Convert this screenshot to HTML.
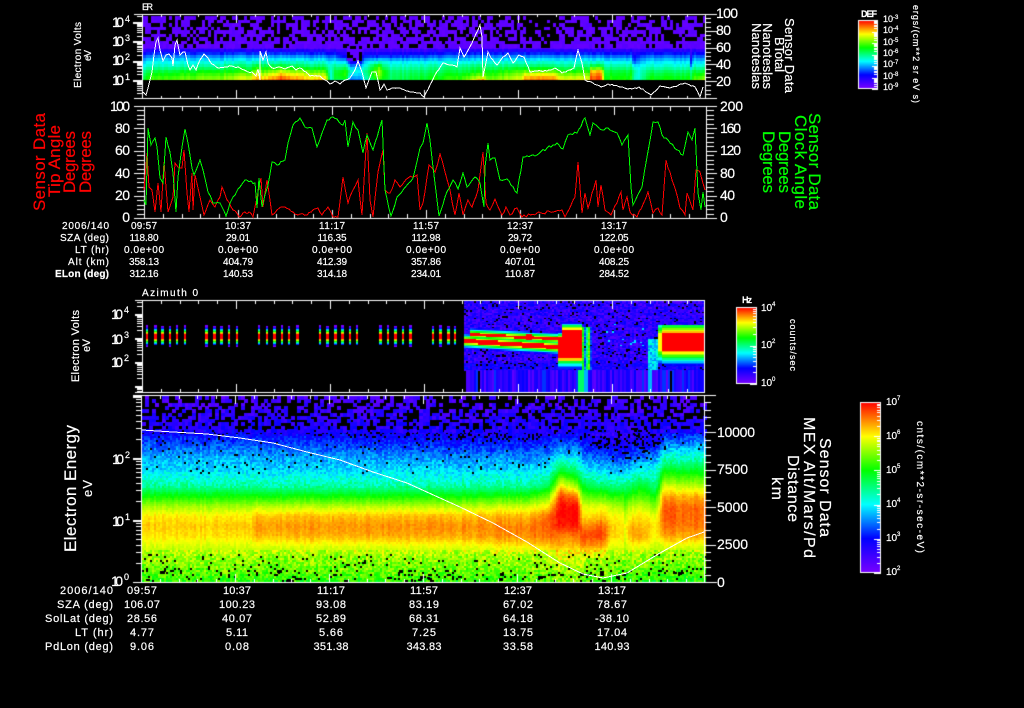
<!DOCTYPE html>
<html lang="en">
<head>
<meta charset="utf-8">
<title>Sensor Data</title>
<style>
html,body{margin:0;padding:0;background:#000;width:1024px;height:708px;overflow:hidden}
canvas,svg{position:absolute;left:0;top:0;display:block}
text{font-family:"Liberation Sans",sans-serif;stroke-width:.2}
.w text,.w{fill:#fff;stroke:#fff}
.r text{fill:#f00;stroke:#f00}
.g text{fill:#0f0;stroke:#0f0}
.t1 text{font-size:10px}
.t2 text{font-size:11px}
.n{font-size:14px}
.s{font-size:9px}
.m{text-anchor:middle}
.e{text-anchor:end}
</style>
</head>
<body>
<canvas id="c" width="1024" height="708"></canvas>
<svg width="1024" height="708" viewBox="0 0 1024 708">
<g fill="none" shape-rendering="crispEdges" stroke-width="1">
<polyline class="j" data-a=".7" stroke="#fff" points="142,92 146,95 148,88 150,80 152,72 154,55 156,42 158,38 160,50 163,61 166,55 169,54 172,58 173,66 175,45 177,40 180,55 183,52 185,52 188,65 190,70 193,65 196,70 200,60 204,54 208,58 212,64 218,68 225,67 232,66 240,68 248,72 252,72 256,76 258,69 260,80 260,51 263,60 266,52 268,63 272,68 280,67 285,69 292,66 296,70 300,68 306,72 310,76 320,76 325,80 330,84 335,81 340,84 345,80 350,78 355,70 358,61 362,72 366,88 369,80 372,72 376,72 380,90 384,84 387,90 392,88 400,88 410,92 420,93 424,97 430,85 435,75 443,63 451,65 457,67 460,48 464,57 472,43 480,25 482,37 483,77 488,52 491,58 497,65 503,57 508,53 513,63 519,55 524,57 530,72 535,71 547,71 555,68 562,73 574,68 578,50 582,63 585,80 593,83 601,87 608,84 620,87 632,89 639,87 651,95 660,86 670,88 685,83 695,87 700,97 703,87"/>
<polyline class="j" data-a="1.6" stroke="#f00" points="144,190 147,153 149,187 152,190 155,212 158,183 161,212 164,162 168,212 173,197 175,163 178,167 182,168 184,150 187,193 189,212 192,173 193,210 195,175 200,197 204,215 210,200 215,207 220,197 222,187 227,200 233,210 239,217 243,213 249,212 253,217 261,178 263,207 267,180 272,215 277,210 285,207 293,212 298,215 307,215 318,208 322,215 328,207 333,217 338,217 343,177 348,203 353,190 358,180 362,215 367,133 370,200 373,217 378,172 383,150 385,190 390,193 395,180 400,187 408,178 417,175 420,210 423,203 429,165 435,172 440,154 445,172 450,190 455,215 459,193 463,215 468,200 472,207 478,190 483,152 486,203 490,210 495,199 502,215 506,207 510,215 517,208 522,217 537,213 553,212 562,210 565,217 575,197 578,162 582,213 585,193 588,208 596,180 598,207 601,185 605,210 611,215 617,203 621,192 623,210 627,197 630,212 637,217 648,192 653,213 658,208 662,215 666,160 672,180 675,188 680,208 685,215 687,193 693,210 696,170 700,172 705,190"/>
<polyline class="j" data-a="1.3" stroke="#0f0" points="144,200 146,205 148,128 151,145 155,138 157,147 160,178 163,183 166,137 170,152 173,173 176,212 178,177 182,147 185,129 188,143 192,168 194,175 197,168 200,160 203,170 208,192 213,203 220,203 226,216 230,203 233,197 240,187 245,180 255,183 257,208 259,178 262,207 265,195 268,185 272,162 277,165 285,160 288,143 293,125 300,118 305,127 312,128 317,147 322,133 327,120 333,117 343,125 345,120 348,147 353,122 358,130 363,153 367,135 373,150 382,120 385,190 391,216 397,197 403,190 413,178 420,148 423,143 427,123 430,140 433,167 439,216 445,197 453,180 458,189 463,173 467,187 475,177 480,183 484,207 485,167 488,143 490,160 495,158 500,180 507,179 517,193 523,157 537,155 547,148 557,143 563,149 568,135 577,133 585,118 590,135 593,123 602,130 608,128 617,133 622,145 628,135 631,187 633,205 642,187 647,157 653,122 658,122 662,135 668,140 677,150 683,155 688,132 692,140 695,128 698,193 701,210 703,192 705,207"/>
<polyline stroke="#fff" points="142,430 173,432 207,434 240,438 273,443 307,452 340,460 373,472 407,483 440,498 460,507 493,523 527,542 560,563 583,574 603,578 627,573 660,553 687,538 704,532"/>
</g>

<g class="r" font-size="17">
<text transform="translate(45,211) rotate(-90)" textLength="98">Sensor Data</text>
<text transform="translate(60,197) rotate(-90)" textLength="72">Tip Angle</text>
<text transform="translate(75,193) rotate(-90)" textLength="62">Degrees</text>
<text transform="translate(91,193) rotate(-90)" textLength="62">Degrees</text>
</g>
<g class="g" font-size="17">
<text transform="translate(809,113) rotate(90)" textLength="97">Sensor Data</text>
<text transform="translate(795,115) rotate(90)" textLength="94">Clock Angle</text>
<text transform="translate(779,131) rotate(90)" textLength="62">Degrees</text>
<text transform="translate(763,131) rotate(90)" textLength="62">Degrees</text>
</g>

<g class="w">
<text x="142" y="10" font-size="9" textLength="11">ER</text>
<text x="142" y="296" font-size="10" textLength="56">Azimuth 0</text>

<!-- panel 1 -->
<g class="n">
<text class="e" x="124" y="27" textLength="12">10</text><text class="e" x="124" y="46" textLength="12">10</text><text class="e" x="124" y="65" textLength="12">10</text><text class="e" x="124" y="85" textLength="12">10</text>
</g>
<g class="s"><text x="125" y="22">4</text><text x="125" y="41">3</text><text x="125" y="60">2</text><text x="125" y="80">1</text></g>
<text transform="translate(81,88) rotate(-90)" font-size="10" textLength="66">Electron Volts</text>
<text transform="translate(91,61) rotate(-90)" font-size="10" textLength="11">eV</text>
<g class="n">
<text x="716" y="18" textLength="22">100</text><text x="716" y="35" textLength="15">80</text><text x="716" y="52" textLength="15">60</text><text x="716" y="69" textLength="15">40</text><text x="716" y="86" textLength="15">20</text>
</g>
<g font-size="13">
<text transform="translate(785,18) rotate(90)" textLength="75">Sensor Data</text>
<text transform="translate(775,37) rotate(90)" textLength="35">BTotal</text>
<text transform="translate(763,23) rotate(90)" textLength="66">Nanoteslas</text>
<text transform="translate(752,23) rotate(90)" textLength="66">Nanoteslas</text>
</g>

<!-- panel 2 -->
<g class="n">
<text class="e" x="130" y="111" textLength="20">100</text><text class="e" x="130" y="133" textLength="15">80</text><text class="e" x="130" y="155" textLength="15">60</text><text class="e" x="130" y="178" textLength="15">40</text><text class="e" x="130" y="200" textLength="15">20</text><text class="e" x="130" y="222" textLength="8">0</text>
<text x="720" y="111" textLength="23">200</text><text x="720" y="133" textLength="21">160</text><text x="720" y="155" textLength="21">120</text><text x="720" y="178" textLength="15">80</text><text x="720" y="200" textLength="15">40</text><text x="720" y="222" textLength="8">0</text>
</g>

<g class="t1">
<text class="e" x="109" y="229" textLength="47">2006/140</text>
<text class="e" x="109" y="241" textLength="49">SZA (deg)</text>
<text class="e" x="109" y="253" textLength="34">LT (hr)</text>
<text class="e" x="109" y="265" textLength="41">Alt (km)</text>
<text class="e" x="109" y="277" textLength="54" font-weight="bold">ELon (deg)</text>
<text class="m" x="144" y="229" textLength="26">09:57</text><text class="m" x="238" y="229" textLength="26">10:37</text><text class="m" x="332" y="229" textLength="26">11:17</text><text class="m" x="426" y="229" textLength="26">11:57</text><text class="m" x="520" y="229" textLength="26">12:37</text><text class="m" x="614" y="229" textLength="26">13:17</text>
<text class="m" x="144" y="241" textLength="29">118.80</text><text class="m" x="238" y="241" textLength="24">29.01</text><text class="m" x="332" y="241" textLength="29">116.35</text><text class="m" x="426" y="241" textLength="29">112.98</text><text class="m" x="520" y="241" textLength="24">29.72</text><text class="m" x="614" y="241" textLength="29">122.05</text>
<text class="m" x="144" y="253" textLength="40">0.0e+00</text><text class="m" x="238" y="253" textLength="40">0.0e+00</text><text class="m" x="332" y="253" textLength="40">0.0e+00</text><text class="m" x="426" y="253" textLength="40">0.0e+00</text><text class="m" x="520" y="253" textLength="40">0.0e+00</text><text class="m" x="614" y="253" textLength="40">0.0e+00</text>
<text class="m" x="144" y="265" textLength="30">358.13</text><text class="m" x="238" y="265" textLength="30">404.79</text><text class="m" x="332" y="265" textLength="30">412.39</text><text class="m" x="426" y="265" textLength="30">357.86</text><text class="m" x="520" y="265" textLength="30">407.01</text><text class="m" x="614" y="265" textLength="30">408.25</text>
<text class="m" x="144" y="277" textLength="29">312.16</text><text class="m" x="238" y="277" textLength="30">140.53</text><text class="m" x="332" y="277" textLength="30">314.18</text><text class="m" x="426" y="277" textLength="30">234.01</text><text class="m" x="520" y="277" textLength="30">110.87</text><text class="m" x="614" y="277" textLength="30">284.52</text>
</g>

<!-- panel 3 -->
<g class="n">
<text class="e" x="123" y="319" textLength="12">10</text><text class="e" x="123" y="344" textLength="12">10</text><text class="e" x="123" y="367" textLength="12">10</text>
</g>
<g class="s"><text x="124" y="313">4</text><text x="124" y="338">3</text><text x="124" y="361">2</text></g>
<text transform="translate(79,382) rotate(-90)" font-size="11" textLength="72">Electron Volts</text>
<text transform="translate(90,352) rotate(-90)" font-size="11" textLength="13">eV</text>

<!-- panel 4 -->
<g class="n">
<text class="e" x="124" y="464" textLength="12">10</text><text class="e" x="124" y="526" textLength="12">10</text><text class="e" x="123" y="586" textLength="12">10</text>
</g>
<g class="s"><text x="125" y="458">2</text><text x="125" y="520">1</text><text x="124" y="580">0</text></g>
<text transform="translate(76,552) rotate(-90)" font-size="17" textLength="127">Electron Energy</text>
<text transform="translate(92,497) rotate(-90)" font-size="13" textLength="17">eV</text>
<g class="n">
<text x="717" y="437" textLength="38">10000</text><text x="717" y="474" textLength="31">7500</text><text x="717" y="512" textLength="31">5000</text><text x="717" y="549" textLength="31">2500</text><text x="717" y="587" textLength="8">0</text>
</g>
<g font-size="16">
<text transform="translate(772,477) rotate(90)" textLength="23">km</text>
<text transform="translate(788,455) rotate(90)" textLength="67">Distance</text>
<text transform="translate(804,417) rotate(90)" textLength="141">MEX Alt/Mars/Pd</text>
<text transform="translate(820,438) rotate(90)" textLength="99">Sensor Data</text>
</g>

<g class="t2">
<text class="e" x="113" y="594" textLength="53">2006/140</text>
<text class="e" x="113" y="608" textLength="56">SZA (deg)</text>
<text class="e" x="113" y="622" textLength="68">SolLat (deg)</text>
<text class="e" x="113" y="636" textLength="38">LT (hr)</text>
<text class="e" x="113" y="650" textLength="68">PdLon (deg)</text>
<text class="m" x="142" y="594" textLength="30">09:57</text><text class="m" x="237" y="594" textLength="28">10:37</text><text class="m" x="331" y="594" textLength="28">11:17</text><text class="m" x="424" y="594" textLength="28">11:57</text><text class="m" x="518" y="594" textLength="28">12:37</text><text class="m" x="612" y="594" textLength="28">13:17</text>
<text class="m" x="142" y="608" textLength="36">106.07</text><text class="m" x="237" y="608" textLength="36">100.23</text><text class="m" x="331" y="608" textLength="30">93.08</text><text class="m" x="424" y="608" textLength="30">83.19</text><text class="m" x="518" y="608" textLength="30">67.02</text><text class="m" x="612" y="608" textLength="30">78.67</text>
<text class="m" x="142" y="622" textLength="30">28.56</text><text class="m" x="237" y="622" textLength="30">40.07</text><text class="m" x="331" y="622" textLength="30">52.89</text><text class="m" x="424" y="622" textLength="30">68.31</text><text class="m" x="518" y="622" textLength="30">64.18</text><text class="m" x="612" y="622" textLength="34">-38.10</text>
<text class="m" x="142" y="636" textLength="24">4.77</text><text class="m" x="237" y="636" textLength="22">5.11</text><text class="m" x="331" y="636" textLength="24">5.66</text><text class="m" x="424" y="636" textLength="24">7.25</text><text class="m" x="518" y="636" textLength="30">13.75</text><text class="m" x="612" y="636" textLength="30">17.04</text>
<text class="m" x="142" y="650" textLength="24">9.06</text><text class="m" x="237" y="650" textLength="24">0.08</text><text class="m" x="331" y="650" textLength="35">351.38</text><text class="m" x="424" y="650" textLength="35">343.83</text><text class="m" x="518" y="650" textLength="30">33.58</text><text class="m" x="612" y="650" textLength="35">140.93</text>
</g>

<!-- colourbar labels -->
<text x="861" y="17" font-size="9" font-weight="bold" textLength="16">DEF</text>
<g font-size="9">
<text x="883" y="22">10</text><text x="883" y="33">10</text><text x="883" y="45">10</text><text x="883" y="56">10</text><text x="883" y="67">10</text><text x="883" y="79">10</text><text x="883" y="90">10</text>
</g>
<g font-size="6">
<text x="893" y="19">-3</text><text x="893" y="30">-4</text><text x="893" y="42">-5</text><text x="893" y="53">-6</text><text x="893" y="64">-7</text><text x="893" y="76">-8</text><text x="893" y="87">-9</text>
</g>
<text transform="translate(913,5) rotate(90)" font-size="9" textLength="98">ergs/(cm**2 sr eV s)</text>

<text x="742" y="303" font-size="9" font-weight="bold" textLength="10">Hz</text>
<g font-size="10"><text x="761" y="311">10</text><text x="761" y="348">10</text><text x="761" y="386">10</text></g>
<g font-size="6"><text x="772" y="306">4</text><text x="772" y="343">2</text><text x="772" y="381">0</text></g>
<text transform="translate(790,319) rotate(90)" font-size="9" textLength="52">counts/sec</text>

<g font-size="10"><text x="886" y="405">10</text><text x="886" y="439">10</text><text x="886" y="473">10</text><text x="886" y="507">10</text><text x="886" y="541">10</text><text x="886" y="575">10</text></g>
<g font-size="6"><text x="897" y="400">7</text><text x="897" y="434">6</text><text x="897" y="468">5</text><text x="897" y="502">4</text><text x="897" y="536">3</text><text x="897" y="570">2</text></g>
<text transform="translate(917,421) rotate(90)" font-size="10" textLength="132">cnts/(cm**2-sr-sec-eV)</text>
</g>
</svg>
<script>
(function(){
var ctx=document.getElementById('c').getContext('2d');
ctx.fillStyle='#000';ctx.fillRect(0,0,1024,708);
var seed=12345;
function R(){seed=(seed*1664525+1013904223)>>>0;return seed/4294967296;}

/* roughen the data traces */
var lines=document.querySelectorAll('polyline.j');
for(var li=0;li<lines.length;li++){
 var pl=lines[li],amp0=parseFloat(pl.getAttribute('data-a')),
     pts=pl.getAttribute('points').trim().split(/\s+/).map(function(s){return s.split(',').map(Number);}),
     out=[];
 for(var pi=0;pi<pts.length-1;pi++){
  var A0=pts[pi],B0=pts[pi+1],dx=B0[0]-A0[0],cnt=Math.floor(dx/2);
  out.push(A0.join(','));
  for(var q=1;q<cnt;q++){
   var t0=q/cnt,yv=A0[1]+(B0[1]-A0[1])*t0+(R()-.5)*2*amp0;
   if(li>0&&yv>217)yv=217;
   out.push((A0[0]+dx*t0).toFixed(1)+','+yv.toFixed(1));
  }
 }
 out.push(pts[pts.length-1].join(','));
 pl.setAttribute('points',out.join(' '));
}

var st=[[0,120,0,255],[.2,0,0,255],[.4,0,255,255],[.6,0,255,0],[.8,255,255,0],[1,255,0,0]];
function col(v){
 v=Math.max(0,Math.min(1,v));
 for(var i=0;i<st.length-1;i++){
  if(v<=st[i+1][0]){var a=st[i],b=st[i+1],t=(v-a[0])/(b[0]-a[0]);
   return 'rgb('+Math.round(a[1]+(b[1]-a[1])*t)+','+Math.round(a[2]+(b[2]-a[2])*t)+','+Math.round(a[3]+(b[3]-a[3])*t)+')';}
 }
 return '#f00';
}
function tbl(T,Y,x,y){
 var i=0;while(i<T.length-2&&x>T[i+1][0])i++;
 var A=T[i],B=T[i+1],t=Math.max(0,Math.min(1,(x-A[0])/(B[0]-A[0])));
 var j=0;while(j<Y.length-2&&y>Y[j+1])j++;
 var u=Math.max(0,Math.min(1,(y-Y[j])/(Y[j+1]-Y[j])));
 var a=A[j+1]*(1-u)+A[j+2]*u,b=B[j+1]*(1-u)+B[j+2]*u;
 return a*(1-t)+b*t;
}
function rect(x,y,w,h,c){ctx.fillStyle=c;ctx.fillRect(x,y,w,h);}

/* panel 1 heat */
var Y1=[16,46,50,55,61,66,71,76,80];
var T1=[[142,.03,.03,.12,.25,.36,.42,.5,.55,.58],[150,.03,.03,.15,.28,.4,.45,.55,.62,.65],[222,.03,.03,.15,.28,.4,.48,.6,.68,.72],[225,.03,.03,.15,.3,.42,.52,.6,.7,.72],[250,.03,.03,.15,.3,.42,.52,.62,.76,.8],[256,.03,.03,.15,.3,.44,.6,.72,.85,.9],[262,.03,.03,.15,.3,.42,.55,.65,.78,.85],[280,.03,.03,.15,.3,.44,.58,.75,.9,.95],[292,.03,.03,.15,.3,.44,.55,.72,.85,.92],[305,.03,.03,.15,.28,.42,.52,.68,.8,.85],[325,.03,.03,.14,.28,.42,.52,.65,.78,.86],[330,.03,.03,.12,.24,.36,.44,.42,.42,.42],[335,.03,.03,.14,.26,.4,.5,.58,.6,.55],[345,.03,.03,.1,.14,.34,.5,.6,.62,.5],[350,.02,.02,.03,.06,.12,.3,.42,.32,.25],[358,.02,.02,.03,.06,.14,.35,.4,.35,.28],[365,.03,.03,.1,.2,.36,.42,.48,.46,.42],[378,.03,.03,.1,.2,.42,.66,.72,.7,.6],[382,.03,.03,.1,.2,.4,.5,.6,.6,.55],[390,.03,.03,.1,.2,.38,.44,.5,.52,.52],[460,.03,.03,.14,.27,.4,.5,.55,.62,.65],[482,.03,.03,.14,.28,.42,.52,.6,.72,.88],[487,.03,.03,.14,.28,.42,.5,.58,.64,.7],[520,.03,.03,.14,.28,.42,.52,.65,.74,.78],[525,.03,.03,.14,.28,.42,.52,.68,.85,.9],[555,.03,.03,.14,.28,.42,.52,.68,.85,.9],[560,.03,.03,.14,.28,.42,.5,.62,.74,.8],[588,.03,.03,.14,.28,.42,.5,.62,.74,.8],[590,.03,.03,.14,.28,.42,.58,.85,.93,.95],[600,.03,.03,.14,.28,.42,.58,.85,.93,.95],[604,.03,.03,.14,.26,.4,.48,.56,.6,.62],[630,.03,.03,.14,.26,.4,.48,.56,.6,.62],[633,.02,.03,.08,.14,.2,.38,.46,.44,.42],[637,.03,.03,.12,.22,.32,.4,.42,.42,.44],[650,.03,.03,.14,.26,.38,.44,.52,.58,.6],[688,.03,.03,.14,.26,.38,.44,.52,.58,.6],[690,.03,.03,.08,.12,.2,.3,.48,.52,.55],[693,.03,.03,.14,.26,.38,.45,.55,.62,.66],[704,.03,.03,.14,.26,.38,.46,.58,.68,.75]];
var x,y;
for(x=142;x<705;x+=2){
 var cn=(R()-.5)*.05;
 for(y=16;y<80;y+=3){
  var h=Math.min(3,80-y);
  if(y<44){continue;}
  rect(x,y,2,h,col(tbl(T1,Y1,x,y+1)+cn));
 }
}
for(x=142;x<705;x+=3){
 for(y=16;y<46;y+=3.5){
  var pb=.42;
  if((x>278&&x<292)||(x>525&&x<558)||(x>592&&x<604))pb=.72;
  if(y>39)pb*=.4;
  if(R()>pb)rect(x,Math.round(y),3,4,col(.03+R()*.03));
  else rect(x,Math.round(y),3,4,'#000');
 }
}
/* dark notch */
for(x=347;x<360;x+=3){for(y=46;y<60;y+=3){if(R()<.4)rect(x,y,3,3,'#000');else rect(x,y,3,3,col(.04));}}

/* panel 3 left small bars */
var bars=[146,154,161,169,176,184,205,213,220,228,236,258,266,273,281,288,296,319,326,334,341,349,356,379,387,394,402,409,432,439,447,454];
bars.forEach(function(bx){
 var ext=R()<.4?2:0,w=R()<.4?3:2;
 for(var yy=326-(R()*2|0);yy<345+ext;yy++){
  var d=Math.abs(yy-336);
  var v=d<=2?1:1-(d-2)*.13;
  rect(bx,yy,w,1,col(v));
 }
});

/* panel 3 heat */
var cols3={};
for(x=464;x<704;x+=2){cols3[x]=.04+R()*.16;if(R()<.06)cols3[x]=-1;if(R()<.1)cols3[x]=.24;}
var strip=[.62,.28,.5,.66,.24,.58];
function f3(x,y){
 var noise=.05+R()*.15;
 if(y>=369){
  var c=cols3[x];
  if(x<466)return -1;
  if(x>=578&&x<583)return .52;
  if((x>=584&&x<588)||(x>=648&&x<651))return .34;
  return c;
 }
 var v=noise;
 if(y>=362)v=.1+R()*.12;
 if(x<558){
  var s=(x-464)/91;
  var y1=333+s*5,y2=340+s*6;
  var d1=x>=470?Math.abs(y-y1):99,d2=Math.abs(y-y2);
  var b1=d1<1.3?1:.78-(d1-1.3)*.13;
  var bb=d2<2.2?1:.8-(d2-2.2)*.13;
  if(x>=526&&x<532&&d1<3)b1=1;
  v=Math.max(v,b1,bb);
 }else if(x<581){
  var top=327,bot=357;
  if(x<562){top=336;bot=357;}
  var e=y<top?(top-y)*.12:(y>bot?(y-bot)*.055:0);
  var b2=(y>=top&&y<=bot)?1:.78-e;
  if(y>bot&&y<=bot+3)b2=.84;
  if(y>=top&&y<top+2&&x>=562)b2=.8;
  v=Math.max(v,b2);
 }else if(x<592&&y>326){
  v=Math.max(v,strip[(x-581)>>1]+(R()-.5)*.12);
 }else if(x>=657){
  var dd=Math.abs(y-341);
  var sc=x<662?.8:1;
  var b3=dd<9?sc:sc*(.9-(dd-9)*.05);
  if(y<324)b3=Math.min(b3,.1);
  v=Math.max(v,b3);
 }else if(x>=648){
  if(y>338)v=Math.max(v,.3+R()*.15);
 }else if(x>=594&&x<645&&y>322&&y<345&&R()<.03){v=.38;}
 return v;
}
for(x=464;x<704;x+=2){for(y=301;y<392;y+=1.5){
 var v=f3(x,y);
 var yy=Math.round(y);
 if(v<0)continue;
 if(y<369&&v<.24&&R()<.08){rect(x,yy,2,2,'#000');continue;}
 rect(x,yy,2,2,col(v));
}}

/* panel 4 heat */
var Y4=[395,410,425,440,455,470,485,495,505,515,525,535,545,555,570,582];
var T4=[[141,.08,.08,.15,.24,.33,.38,.48,.6,.72,.81,.84,.82,.77,.72,.68,.62],[250,.08,.08,.14,.24,.33,.38,.47,.6,.72,.81,.84,.82,.77,.72,.68,.62],[256,.08,.08,.14,.24,.33,.38,.47,.6,.74,.85,.88,.86,.78,.72,.68,.62],[460,.08,.08,.12,.2,.3,.38,.47,.6,.74,.85,.89,.87,.79,.72,.68,.62],[530,.08,.08,.12,.2,.3,.38,.48,.62,.76,.86,.9,.9,.82,.73,.69,.63],[548,.08,.08,.12,.22,.32,.42,.55,.7,.82,.93,.94,.92,.85,.75,.7,.68],[560,.08,.08,.12,.25,.38,.58,.82,.96,1,1,.98,.9,.86,.78,.72,.7],[577,.08,.08,.12,.23,.36,.5,.7,.88,.98,1,.98,.9,.84,.78,.72,.7],[581,.08,.08,.12,.2,.3,.42,.58,.68,.78,.82,.9,.95,.9,.76,.7,.65],[600,.08,.08,.1,.15,.26,.38,.52,.65,.78,.84,.93,.96,.88,.75,.7,.64],[610,.08,.08,.1,.15,.24,.36,.5,.62,.74,.8,.84,.84,.78,.72,.68,.62],[623,.08,.08,.1,.15,.22,.35,.5,.62,.72,.8,.82,.82,.78,.72,.68,.62],[625,.08,.08,.1,.14,.22,.38,.5,.58,.64,.72,.77,.74,.72,.7,.66,.6],[627,.08,.08,.1,.15,.24,.38,.52,.62,.74,.8,.85,.86,.8,.72,.68,.62],[640,.08,.08,.1,.17,.28,.42,.58,.66,.76,.82,.86,.88,.8,.72,.68,.62],[655,.08,.08,.1,.15,.3,.42,.5,.6,.7,.78,.82,.8,.76,.7,.66,.6],[662,.08,.08,.14,.26,.42,.58,.76,.86,.92,.93,.91,.87,.78,.72,.66,.6],[704,.08,.1,.16,.3,.44,.58,.74,.86,.91,.92,.91,.87,.78,.7,.66,.6]];
for(x=142;x<705;x+=2){
 var cj=(R()-.5)*.03;
 for(y=396;y<582;y+=2){
  var base=tbl(T4,Y4,x,y);
  var amp=y>548?.14:(base<.5?.1:.03);
  if(y<430)continue;
  var val=base+cj+(R()-.5)*amp;
  var pb4=base<.2?.22:base<.4?.03:(y>565?.09:(y>552?.04:0));
  if(R()<pb4)continue;
  rect(x,y,2,2,col(val));
 }
}
for(x=142;x<705;x+=3.3){
 for(y=396;y<431;y+=3.3){
  var dp=(y-396)/35;
  if(R()<.62-dp*.3){continue;}
  rect(Math.round(x),Math.round(y),4,4,col(.03+R()*.1+dp*.08));
 }
}
/* black blobs at bottom */
for(var n=0;n<32;n++){rect(142+R()*560|0,570+R()*10|0,2+R()*4|0,2+R()*2|0,'#000');}
for(var n2=0;n2<40;n2++){rect(590+R()*70|0,428+R()*30|0,2+R()*4|0,2,'#000');}

/* colourbars */
function bar(x,y,w,h,decades,tickLen,major){
 for(var i=0;i<h;i++){rect(x,y+i,w,1,col(1-i/(h-1)));}
 ctx.strokeStyle='#fff';ctx.lineWidth=1;ctx.strokeRect(x+.5,y+.5,w-1,h-1);
 var dec=h/decades,k,m;
 for(k=0;k<decades;k++){
  var by=y+h-k*dec;
  rect(x+w-major,Math.round(by),major,1,'#fff');
  for(m=2;m<10;m++){
   var ty=by-Math.log(m)/Math.LN10*dec;
   rect(x+w-tickLen,Math.round(ty),tickLen,1,'#fff');
  }
 }
}
bar(860,402,21,171,5,4,7);
bar(858,20,20,69,6,4,6);
bar(736,307,21,77,2,4,7);

/* axes and ticks */
var W='#fff';
function xticks(x0,x1,yT,yB,minor,major){
 var i=0;
 for(var xx=x0;xx<=x1;xx+=18.8,i++){
  var l=(i%5==0)?major:minor,px=Math.round(xx);
  rect(px,yT,1,l,W);rect(px,yB-l+1,1,l,W);
 }
}
function frame(x0,y0,x1,y1,ex0,ex1){
 rect(ex0,y0,x1-ex0+1,1,W);rect(ex0,y1,ex1-ex0+1,1,W);
 rect(x0,y0,1,y1-y0+1,W);rect(x1,y0,1,y1-y0+1,W);
}
function logticks(x,y10,dec,ymin,ymax,minor,major,n){
 for(var d=-1;d<n;d++){
  var by=y10-d*dec;
  for(var m=1;m<10;m++){
   var yy=Math.round(by-Math.log(m)/Math.LN10*dec);
   if(yy<ymin||yy>ymax)continue;
   var l=m==1?major:minor;
   rect(x-l,yy,l,m==1?2:1,W);
  }
 }
}
function linticks(x,y0,y1,step,every,minor,major){
 var i=0;
 for(var yy=y1;yy>=y0-.5;yy-=step,i++){
  var l=i%every==0?major:minor;
  rect(x+1,Math.round(yy),l,1,W);
 }
}
function linticksL(x,y0,y1,step,every,minor,major){
 var i=0;
 for(var yy=y1;yy>=y0-.5;yy-=step,i++){
  var l=i%every==0?major:minor;
  rect(x-l,Math.round(yy),l,1,W);
 }
}
/* p1 */
frame(142,14,705,98,134,716);
xticks(142,705,14,98,3,9);
logticks(142,80,19.3,15,97,5,9,4);
linticks(705,14,98,4.2,4,5,11);
/* p2 */
frame(144,106,706,218,134,716);
xticks(144,705,106,218,5,9);
linticksL(144,106,218,4.48,5,7,10);
linticks(706,106,218,4.48,5,7,10);
/* p3 */
frame(142,300,704,392,135,704);
xticks(142,704,300,392,4,9);
logticks(142,385.5,24,301,391,5,7,4);
/* p4 */
frame(141,395,704,582,133,716);
xticks(141,704,395,582,4,9);
logticks(141,520,62,396,581,5,8,3);
linticks(704,395,582,7.5,5,6,11);
})();
</script>
</body>
</html>
